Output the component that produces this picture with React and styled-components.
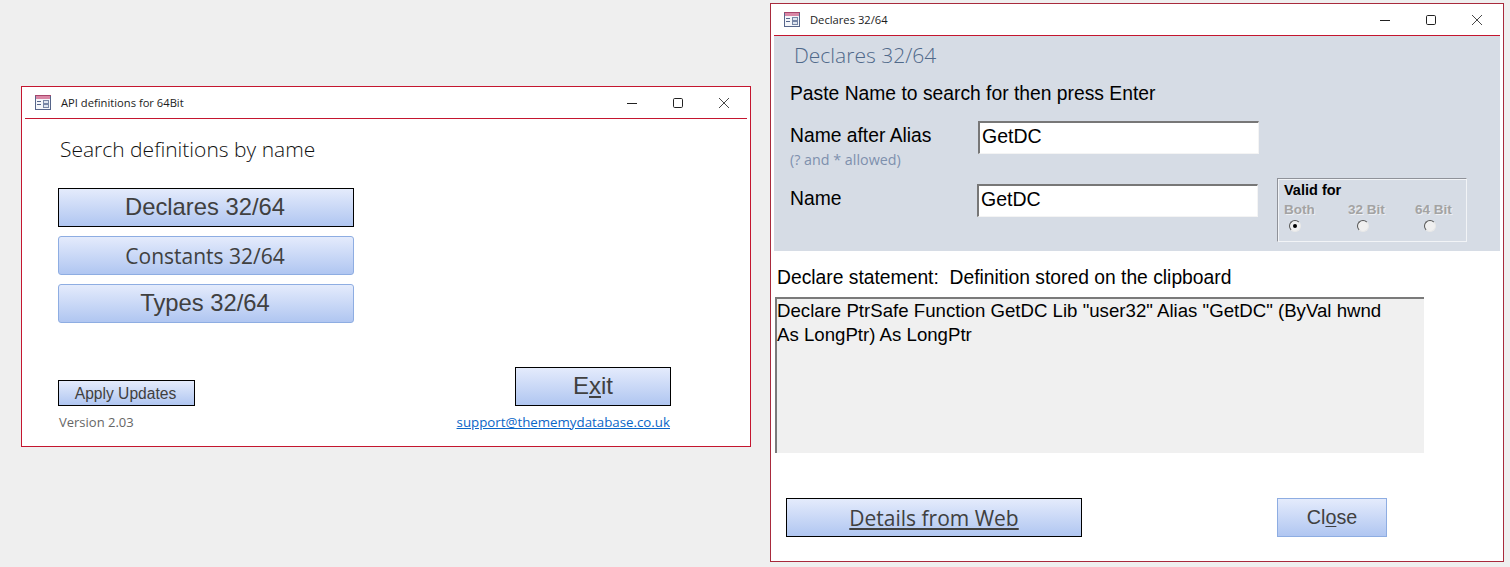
import React from 'react';
import styled, { createGlobalStyle, css } from 'styled-components';

const Global = createGlobalStyle`
    html, body {
        margin: 0;
        padding: 0;
        background: #efefef;
    }
    * {
        box-sizing: border-box;
    }
`;

const arial = `"Liberation Sans", Arial, sans-serif`;
const segoe = `"Open Sans", "Noto Sans", sans-serif`;

const FormIcon = () => (
    <IconSvg width="16" height="15" viewBox="0 0 16 15">
        <rect x="0.5" y="0.5" width="15" height="14" fill="#f4f6fa" stroke="#56658a" />
        <rect x="1" y="1" width="14" height="3" fill="#d987a6" />
        <rect x="0" y="0" width="16" height="1" fill="#a9466c" />
        <rect x="2" y="6" width="4" height="1" fill="#56658a" />
        <rect x="2" y="9" width="4" height="1" fill="#56658a" />
        <rect x="8.5" y="5.5" width="5" height="3" fill="#dfe5f0" stroke="#7786a6" />
        <rect x="8.5" y="9.5" width="5" height="3" fill="#dfe5f0" stroke="#7786a6" />
    </IconSvg>
);

const WindowControls = () => (
    <Controls>
        <svg width="10" height="10" viewBox="0 0 10 10">
            <path d="M0 5.5H10" stroke="#222" fill="none" />
        </svg>
        <svg width="10" height="10" viewBox="0 0 10 10">
            <rect x="0.5" y="0.5" width="9" height="9" rx="1.2" stroke="#222" fill="none" />
        </svg>
        <svg width="10" height="10" viewBox="0 0 10 10">
            <path d="M0 0L10 10M10 0L0 10" stroke="#333" strokeWidth="0.9" fill="none" />
        </svg>
    </Controls>
);

const App = () => {
    return (
        <Stage>
            <Global />
            <MainWindow>
                <TitleBar>
                    <FormIcon />
                    <TitleText>API definitions for 64Bit</TitleText>
                    <WindowControls />
                </TitleBar>
                <MainBody>
                    <SearchHeading>Search definitions by name</SearchHeading>
                    <MenuList>
                        <MenuButton $outlined>Declares 32/64</MenuButton>
                        <MenuButton $soft $segoe>Constants 32/64</MenuButton>
                        <MenuButton $soft>Types 32/64</MenuButton>
                    </MenuList>
                    <ActionRow>
                        <SmallButton>Apply Updates</SmallButton>
                        <ExitButton>E<u>x</u>it</ExitButton>
                    </ActionRow>
                    <FooterRow>
                        <Version>Version 2.03</Version>
                        <Support href="#">support@thememydatabase.co.uk</Support>
                    </FooterRow>
                </MainBody>
            </MainWindow>

            <DetailWindow>
                <TitleBar>
                    <FormIcon />
                    <TitleText>Declares 32/64</TitleText>
                    <WindowControls />
                </TitleBar>
                <SearchPanel>
                    <PanelHeading>Declares 32/64</PanelHeading>
                    <PasteHint>Paste Name to search for then press Enter</PasteHint>
                    <AliasRow>
                        <div>
                            <FieldLabel>Name after Alias</FieldLabel>
                            <FieldNote>(? and * allowed)</FieldNote>
                        </div>
                        <TextField>GetDC</TextField>
                    </AliasRow>
                    <NameRow>
                        <FieldLabel>Name</FieldLabel>
                        <TextField>GetDC</TextField>
                        <ValidBox>
                            <ValidTitle>Valid for</ValidTitle>
                            <ValidGrid>
                                <ValidOption>
                                    <span>Both</span>
                                    <Radio $checked />
                                </ValidOption>
                                <ValidOption>
                                    <span>32 Bit</span>
                                    <Radio />
                                </ValidOption>
                                <ValidOption>
                                    <span>64 Bit</span>
                                    <Radio />
                                </ValidOption>
                            </ValidGrid>
                        </ValidBox>
                    </NameRow>
                </SearchPanel>
                <StatementLabel>Declare statement:&nbsp; Definition stored on the clipboard</StatementLabel>
                <StatementBox>
                    Declare PtrSafe Function GetDC Lib "user32" Alias "GetDC" (ByVal hwnd As LongPtr) As LongPtr
                </StatementBox>
                <DetailActions>
                    <WebButton><u>Details from Web</u></WebButton>
                    <CloseButton>Cl<u>o</u>se</CloseButton>
                </DetailActions>
            </DetailWindow>
        </Stage>
    );
}

export default App;

const Stage = styled.div`
    display: flex;
    align-items: flex-start;
    min-height: 567px;
    padding: 3px 0 0 21px;
    background: #efefef;
    overflow: hidden;
`;
const Frame = styled.div`
    background: #fff;
    padding: 0 3px;
`;
const MainWindow = styled(Frame)`
    width: 730px;
    height: 361px;
    margin-top: 83px;
    border: 1px solid #c4162f;
`;
const DetailWindow = styled(Frame)`
    width: 734px;
    height: 559px;
    margin-left: 19px;
    border: 1px solid #a82a3c;
`;
const TitleBar = styled.div`
    display: flex;
    align-items: center;
    height: 32px;
    padding-left: 10px;
    border-bottom: 1px solid #c4162f;
`;
const IconSvg = styled.svg`
    flex: none;
`;
const TitleText = styled.div`
    margin-left: 10px;
    font: 400 11.2px ${segoe};
    color: #1c1c1c;
`;
const Controls = styled.div`
    display: flex;
    gap: 36px;
    margin-left: auto;
    padding-right: 18px;
`;
const MainBody = styled.div`
    display: flex;
    flex-direction: column;
    padding: 16px 76px 0 33px;
`;
const SearchHeading = styled.div`
    height: 30px;
    margin-left: 2px;
    font: 300 21px/28px ${segoe};
    color: #111;
`;
const MenuList = styled.div`
    display: flex;
    flex-direction: column;
    gap: 9px;
    width: 296px;
    margin-top: 23px;
`;
const gradient = css`
    display: flex;
    align-items: center;
    justify-content: center;
    background: linear-gradient(#e4ebfc, #b0c6f1);
    color: #404040;
    font-family: ${arial};
    u {
        text-underline-offset: 2px;
    }
`;
const MenuButton = styled.div`
    ${gradient}
    height: 39px;
    padding: 0 2px 1px 0;
    font-size: 23.8px;
    border: 1px solid ${props => props.$soft ? '#8eade2' : '#000'};
    border-radius: ${props => props.$soft ? '3px' : '0'};
    ${props => props.$segoe && css`
        padding-bottom: 0;
        font-family: ${segoe};
        font-size: 21px;
    `}
`;
const ActionRow = styled.div`
    display: flex;
    align-items: flex-end;
    justify-content: space-between;
    margin-top: 44px;
`;
const SmallButton = styled.div`
    ${gradient}
    width: 137px;
    height: 26px;
    padding: 2px 2px 0 0;
    font-size: 15.6px;
    border: 1px solid #000;
`;
const ExitButton = styled.div`
    ${gradient}
    width: 156px;
    height: 39px;
    padding-bottom: 2px;
    font-size: 24px;
    border: 1px solid #000;
`;
const FooterRow = styled.div`
    display: flex;
    align-items: center;
    justify-content: space-between;
    height: 18px;
    margin-top: 7px;
    padding: 0 1px 0 1px;
`;
const Version = styled.div`
    font: 400 13px ${segoe};
    color: #666;
`;
const Support = styled.a`
    font: 400 13.3px ${segoe};
    color: #0a66c8;
`;
const SearchPanel = styled.div`
    height: 215px;
    padding: 4px 0 0 16px;
    background: #d6dce5;
    font-family: ${arial};
`;
const PanelHeading = styled.div`
    height: 30px;
    margin-left: 4px;
    font: 300 21px/30px ${segoe};
    color: #50698a;
`;
const PasteHint = styled.div`
    height: 24px;
    margin-top: 11px;
    font-size: 19.3px;
    line-height: 26px;
    color: #000;
`;
const AliasRow = styled.div`
    display: grid;
    grid-template-columns: 188px 281px;
    height: 57px;
    margin-top: 16px;
`;
const NameRow = styled.div`
    display: grid;
    grid-template-columns: 187px 281px 190px;
    column-gap: 0;
    align-items: start;
`;
const FieldLabel = styled.div`
    height: 24px;
    margin-top: 2px;
    font-size: 19.3px;
    line-height: 26px;
    color: #000;
    ${NameRow} > & {
        margin-top: 8px;
    }
`;
const FieldNote = styled.div`
    margin-top: 5px;
    font: 400 14.3px/16px ${segoe};
    color: #7e90ad;
`;
const TextField = styled.div`
    height: 33px;
    padding-left: 2px;
    background: #fff;
    border-style: solid;
    border-width: 2px 1px 1px 2px;
    border-color: #777 #f4f4f4 #f4f4f4 #777;
    font-size: 19.5px;
    line-height: 26px;
    color: #000;
    ${NameRow} > & {
        margin-top: 6px;
    }
`;
const ValidBox = styled.div`
    width: 190px;
    height: 64px;
    margin-left: 19px;
    padding: 4px 6px 0;
    border-style: solid;
    border-width: 1px;
    border-color: #8f9299 #f2f4f7 #f2f4f7 #8f9299;
    box-shadow: inset 1px 1px 0 #f2f4f7;
`;
const ValidTitle = styled.div`
    font-size: 14.5px;
    font-weight: 700;
    line-height: 15px;
    color: #000;
`;
const ValidGrid = styled.div`
    display: grid;
    grid-template-columns: 64px 67px 50px;
    margin-top: 5px;
`;
const ValidOption = styled.div`
    display: flex;
    flex-direction: column;
    font-size: 13.5px;
    font-weight: 700;
    line-height: 14px;
    color: #a3a3a3;
    text-shadow: 1px 1px 0 #eef0f4;
`;
const Radio = styled.div`
    position: relative;
    width: 12px;
    height: 12px;
    margin: 3px 0 0 ${props => props.$checked ? '5px' : '9px'};
    border-radius: 50%;
    background: #f0f0f0;
    border: 1px solid;
    border-color: #555 #e8e8e8 #e8e8e8 #555;
    ${props => props.$checked && css`
        &::after {
            content: '';
            position: absolute;
            left: 3px;
            top: 3px;
            width: 4px;
            height: 4px;
            border-radius: 50%;
            background: #000;
        }
    `}
`;
const StatementLabel = styled.div`
    height: 24px;
    margin: 14px 0 0 3px;
    font: 400 19.3px/26px ${arial};
    color: #000;
`;
const StatementBox = styled.div`
    width: 649px;
    height: 156px;
    margin: 8px 0 0 1px;
    padding: 0 30px 0 0;
    background: #f0f0f0;
    border-style: solid;
    border-width: 2px 0 0 2px;
    border-color: #7a7a7a;
    font: 400 18.65px/24px ${arial};
    color: #000;
`;
const DetailActions = styled.div`
    display: flex;
    justify-content: space-between;
    width: 601px;
    margin: 45px 0 0 12px;
`;
const WebButton = styled.div`
    ${gradient}
    width: 296px;
    height: 39px;
    font-family: ${segoe};
    font-size: 21px;
    border: 1px solid #000;
    u {
        text-decoration-thickness: 2px;
    }
`;
const CloseButton = styled.div`
    ${gradient}
    width: 110px;
    height: 39px;
    font-size: 19.7px;
    border: 1px solid #8eade2;
`;
